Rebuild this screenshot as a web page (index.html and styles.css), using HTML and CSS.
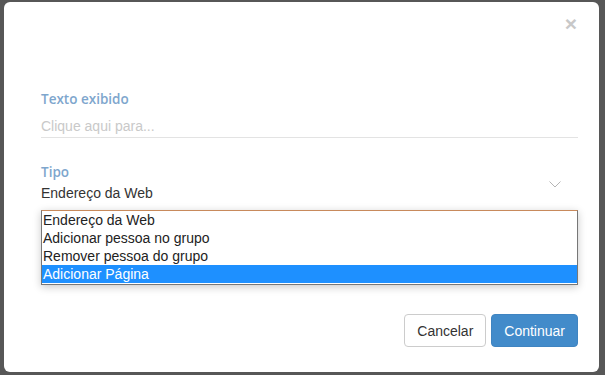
FILE: index.html
```html
<!DOCTYPE html>
<html>
<head>
  <title>Inserir link</title>
  <link rel="stylesheet" href="styles.css">
</head>
<body>
  <div class="modal">
    <div class="modal-header">
      <button class="close" type="button">&times;</button>
    </div>
    <div class="modal-body">
      <div class="field">
        <label class="field-label">Texto exibido</label>
        <div class="text-input">Clique aqui para...</div>
      </div>
      <div class="field field-select">
        <div class="select-main">
          <label class="field-label">Tipo</label>
          <div class="select-value">Endereço da Web</div>
        </div>
        <svg class="chevron" width="12" height="7" viewBox="0 0 12 7">
          <polyline points="0.5,0.5 6,6 11.5,0.5" fill="none" stroke="#b5b5b5" stroke-width="1"/>
        </svg>
        <ul class="options">
          <li>Endereço da Web</li>
          <li>Adicionar pessoa no grupo</li>
          <li>Remover pessoa do grupo</li>
          <li class="selected">Adicionar Página</li>
        </ul>
      </div>
    </div>
    <div class="modal-footer">
      <button class="btn btn-default" type="button">Cancelar</button>
      <button class="btn btn-primary" type="button">Continuar</button>
    </div>
  </div>
</body>
</html>
```

FILE: styles.css
```css
body {
  margin: 0;
  padding: 0;
  background-color: #575757;
  font-family: "Liberation Sans", Arial, sans-serif;
  font-size: 14px;
  color: #333;
  height: 375px;
  overflow: hidden;
}
.modal {
  display: flex;
  flex-direction: column;
  background-color: #fff;
  margin: 2px 6px 0 4px;
  height: 370px;
  border-radius: 6px;
  box-sizing: border-box;
}
.modal-header {
  display: flex;
  justify-content: flex-end;
  padding: 12px 22px 0;
  height: 20px;
}
.close {
  border: 0;
  background: none;
  padding: 0;
  font-family: "Liberation Sans", Arial, sans-serif;
  font-size: 21px;
  font-weight: bold;
  line-height: 20px;
  color: #c8c8c8;
  cursor: pointer;
}
.modal-body {
  padding: 56px 21px 0 37px;
}
.field {
  margin-bottom: 25px;
}
.field-label {
  display: block;
  font-family: "Open Sans", sans-serif;
  font-weight: 600;
  font-size: 13.5px;
  line-height: 18px;
  color: #7ea6cd;
}
.text-input {
  margin-top: 8px;
  height: 21px;
  line-height: 21px;
  color: #c9c9c9;
  border-bottom: 1px solid #e3e3e3;
}
.field-select {
  position: relative;
  display: flex;
  align-items: center;
  margin-bottom: 0;
}
.select-main {
  flex: 1;
}
.select-value {
  margin-top: 2px;
  height: 20px;
  line-height: 20px;
  padding-bottom: 6px;
  color: #333;
}
.chevron {
  margin-right: 17px;
  margin-bottom: 4px;
}
.options {
  position: absolute;
  left: 0;
  right: 0;
  top: 47px;
  margin: 0;
  padding: 0 0 1px;
  list-style: none;
  background-color: #fff;
  border: 1px solid #777;
  border-top-color: #c88a5c;
  box-shadow: 0 2px 8px rgba(0, 0, 0, 0.22);
}
.options li {
  height: 18px;
  line-height: 18px;
  padding-left: 1px;
  color: #222;
}
.options li.selected {
  background-color: #1e90ff;
  color: #fff;
}
.modal-footer {
  display: flex;
  justify-content: flex-end;
  gap: 5px;
  margin-top: auto;
  padding: 0 21px 25px;
}
.btn {
  height: 33px;
  padding: 0 12px;
  border-radius: 4px;
  font-family: "Liberation Sans", Arial, sans-serif;
  font-size: 14px;
  cursor: pointer;
}
.btn-default {
  background-color: #fff;
  border: 1px solid #ccc;
  color: #333;
}
.btn-primary {
  background-color: #428bca;
  border: 1px solid #3f84c1;
  color: #fff;
}
```
